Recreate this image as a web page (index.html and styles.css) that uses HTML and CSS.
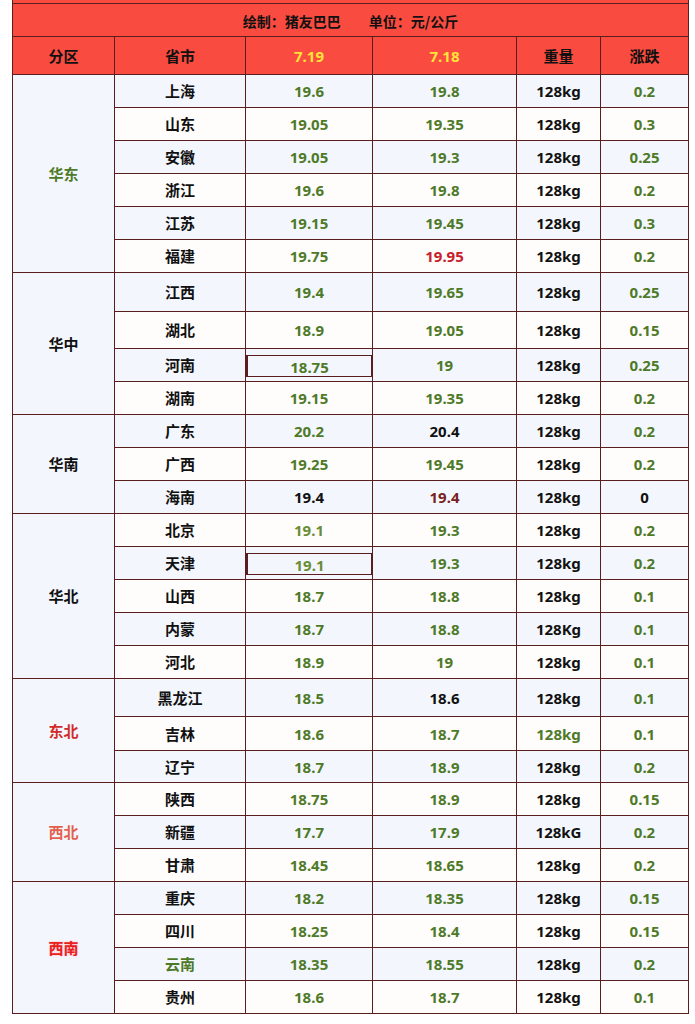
FILE: index.html
```html
<!DOCTYPE html>
<html lang="zh">
<head>
<meta charset="utf-8">
<link rel="stylesheet" href="styles.css">
</head>
<body>
<table class="price">
  <colgroup>
    <col class="c-zone"><col class="c-prov"><col class="c-d1"><col class="c-d2"><col class="c-w"><col class="c-ch">
  </colgroup>
  <tr class="r-strip"><td colspan="6"></td></tr>
  <tr class="r-title"><td colspan="6">绘制：猪友巴巴<span class="gap"></span>单位：元/公斤</td></tr>
  <tr class="r-head">
    <td>分区</td><td>省市</td><td class="num date">7.19</td><td class="num date">7.18</td><td>重量</td><td>涨跌</td>
  </tr>

  <tr class="b h33"><td class="zone green" rowspan="6">华东</td><td>上海</td><td class="num g">19.6</td><td class="num g">19.8</td><td class="num">128kg</td><td class="num g">0.2</td></tr>
  <tr class="w h33"><td>山东</td><td class="num g">19.05</td><td class="num g">19.35</td><td class="num">128kg</td><td class="num g">0.3</td></tr>
  <tr class="b h33"><td>安徽</td><td class="num g">19.05</td><td class="num g">19.3</td><td class="num">128kg</td><td class="num g">0.25</td></tr>
  <tr class="w h33"><td>浙江</td><td class="num g">19.6</td><td class="num g">19.8</td><td class="num">128kg</td><td class="num g">0.2</td></tr>
  <tr class="b h33"><td>江苏</td><td class="num g">19.15</td><td class="num g">19.45</td><td class="num">128kg</td><td class="num g">0.3</td></tr>
  <tr class="w h33"><td>福建</td><td class="num g">19.75</td><td class="num red">19.95</td><td class="num">128kg</td><td class="num g">0.2</td></tr>

  <tr class="b h39"><td class="zone" rowspan="4">华中</td><td>江西</td><td class="num g">19.4</td><td class="num g">19.65</td><td class="num">128kg</td><td class="num g">0.25</td></tr>
  <tr class="w h37"><td>湖北</td><td class="num g">18.9</td><td class="num g">19.05</td><td class="num">128kg</td><td class="num g">0.15</td></tr>
  <tr class="b h33"><td>河南</td><td class="boxcell"><div class="box num g">18.75</div></td><td class="num g">19</td><td class="num">128kg</td><td class="num g">0.25</td></tr>
  <tr class="w h33"><td>湖南</td><td class="num g">19.15</td><td class="num g">19.35</td><td class="num">128kg</td><td class="num g">0.2</td></tr>

  <tr class="b h33"><td class="zone" rowspan="3">华南</td><td>广东</td><td class="num g">20.2</td><td class="num">20.4</td><td class="num">128kg</td><td class="num g">0.2</td></tr>
  <tr class="w h33"><td>广西</td><td class="num g">19.25</td><td class="num g">19.45</td><td class="num">128kg</td><td class="num g">0.2</td></tr>
  <tr class="b h33"><td>海南</td><td class="num">19.4</td><td class="num brown">19.4</td><td class="num">128kg</td><td class="num">0</td></tr>

  <tr class="w h33"><td class="zone" rowspan="5">华北</td><td>北京</td><td class="num lg">19.1</td><td class="num g">19.3</td><td class="num">128kg</td><td class="num g">0.2</td></tr>
  <tr class="b h33"><td>天津</td><td class="boxcell"><div class="box num lg">19.1</div></td><td class="num g">19.3</td><td class="num">128kg</td><td class="num g">0.2</td></tr>
  <tr class="w h33"><td>山西</td><td class="num g">18.7</td><td class="num g">18.8</td><td class="num">128kg</td><td class="num g">0.1</td></tr>
  <tr class="b h33"><td>内蒙</td><td class="num g">18.7</td><td class="num g">18.8</td><td class="num">128Kg</td><td class="num g">0.1</td></tr>
  <tr class="w h33"><td>河北</td><td class="num g">18.9</td><td class="num g">19</td><td class="num">128kg</td><td class="num g">0.1</td></tr>

  <tr class="b h38"><td class="zone dbred" rowspan="3">东北</td><td>黑龙江</td><td class="num g">18.5</td><td class="num">18.6</td><td class="num">128kg</td><td class="num g">0.1</td></tr>
  <tr class="w h34"><td>吉林</td><td class="num g">18.6</td><td class="num g">18.7</td><td class="num g">128kg</td><td class="num g">0.1</td></tr>
  <tr class="b h32"><td>辽宁</td><td class="num g">18.7</td><td class="num g">18.9</td><td class="num">128kg</td><td class="num g">0.2</td></tr>

  <tr class="w h33"><td class="zone salmon" rowspan="3">西北</td><td>陕西</td><td class="num g">18.75</td><td class="num g">18.9</td><td class="num">128kg</td><td class="num g">0.15</td></tr>
  <tr class="b h33"><td>新疆</td><td class="num g">17.7</td><td class="num g">17.9</td><td class="num">128kG</td><td class="num g">0.2</td></tr>
  <tr class="w h33"><td>甘肃</td><td class="num g">18.45</td><td class="num g">18.65</td><td class="num">128kg</td><td class="num g">0.2</td></tr>

  <tr class="b h33"><td class="zone bright" rowspan="4">西南</td><td>重庆</td><td class="num g">18.2</td><td class="num g">18.35</td><td class="num">128kg</td><td class="num g">0.15</td></tr>
  <tr class="w h33"><td>四川</td><td class="num g">18.25</td><td class="num g">18.4</td><td class="num">128kg</td><td class="num g">0.15</td></tr>
  <tr class="b h33"><td class="green">云南</td><td class="num g">18.35</td><td class="num g">18.55</td><td class="num">128kg</td><td class="num g">0.2</td></tr>
  <tr class="w h33"><td>贵州</td><td class="num g">18.6</td><td class="num g">18.7</td><td class="num">128kg</td><td class="num g">0.1</td></tr>
</table>
</body>
</html>
```
FILE: styles.css
```css
html, body {
  margin: 0;
  padding: 0;
  background: #ffffff;
}

.price {
  margin-left: 12px;
  border-collapse: collapse;
  table-layout: fixed;
  width: 676px;
  font-family: "Noto Sans CJK SC", "Noto Sans", sans-serif;
  font-weight: bold;
  font-size: 15px;
  color: #111111;
}

.c-zone { width: 102px; }
.c-prov { width: 131px; }
.c-d1 { width: 127px; }
.c-d2 { width: 144px; }
.c-w { width: 84px; }
.c-ch { width: 88px; }

.price td {
  border: 1px solid #5b1e1e;
  padding: 0;
  text-align: center;
  vertical-align: middle;
  line-height: 18px;
}

.r-strip td {
  height: 3px;
  border-top: none;
  background: #f94b3f;
}

.r-title td {
  height: 30px;
  background: #f94b3f;
  padding-top: 2px;
  font-size: 14px;
}

.gap {
  display: inline-block;
  width: 28px;
}

.r-head td {
  height: 37px;
  background: #f94b3f;
}

.num {
  font-family: "Noto Sans", "Noto Sans CJK SC", sans-serif;
  font-size: 15px;
}

.date { color: #ffe23a; }

.b td { background: #f3f7fd; }
.w td { background: #fffcfc; }
.price td.zone { background: #f3f7fd; }

.h32 td { height: 31px; }
.h33 td { height: 32px; }
.h34 td { height: 33px; }
.h37 td { height: 36px; }
.h38 td { height: 37px; }
.h39 td { height: 38px; }

.g { color: #4e7a28; }
.lg { color: #6a8d34; }
.red { color: #c8202a; }
.brown { color: #7a2222; }
.green { color: #4e7a28; }
.dbred { color: #d22a2a; }
.salmon { color: #e4604e; }
.bright { color: #e8201e; text-shadow: 0 0 2px rgba(255, 120, 120, 0.6); }

.price td.boxcell {
  vertical-align: top;
  padding-top: 6px;
  height: 26px;
}

.box {
  height: 20px;
  line-height: 22px;
  border: 1px solid #5b1e1e;
  border-left-width: 2px;
  box-sizing: content-box;
}
```
